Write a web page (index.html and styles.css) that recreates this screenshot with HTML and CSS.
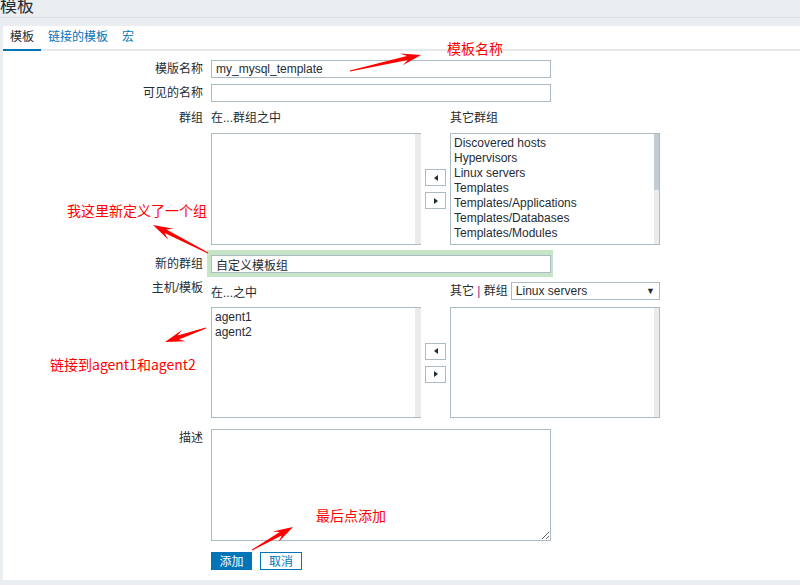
FILE: index.html
```html
<!DOCTYPE html>
<html lang="zh-CN">

<head>
  <meta charset="UTF-8">
  <title>模板</title>
  <link rel="stylesheet" href="styles.css">
</head>

<body>
  <div class="page-title">模板</div>

  <div class="panel">
    <ul class="tabs">
      <li class="active">模板</li>
      <li><a href="#">链接的模板</a></li>
      <li><a href="#">宏</a></li>
    </ul>

    <form class="form">
      <div class="row row-first">
        <label>模版名称</label>
        <div><input class="input" type="text" value="my_mysql_template"></div>
      </div>

      <div class="row row-visible">
        <label>可见的名称</label>
        <div><input class="input" type="text" value=""></div>
      </div>

      <div class="row row-groups">
        <label>群组</label>
        <div class="twin twin-groups">
          <div class="twin-head">在...群组之中</div>
          <div class="twin-head">其它群组</div>
          <div class="listbox listbox-left">
            <div class="items"></div>
            <div class="track"></div>
          </div>
          <div class="mover">
            <button type="button" class="move move-left"></button>
            <button type="button" class="move move-right"></button>
          </div>
          <div class="listbox listbox-right">
            <div class="items">
              <div>Discovered hosts</div>
              <div>Hypervisors</div>
              <div>Linux servers</div>
              <div>Templates</div>
              <div>Templates/Applications</div>
              <div>Templates/Databases</div>
              <div>Templates/Modules</div>
            </div>
            <div class="track"><div class="thumb"></div></div>
          </div>
        </div>
      </div>

      <div class="row row-newgroup">
        <label>新的群组</label>
        <div><span class="highlight"><input class="input" type="text" value="自定义模板组"></span></div>
      </div>

      <div class="row row-hosts">
        <label class="label-hosts">主机/模板</label>
        <div class="twin twin-hosts">
          <div class="twin-head head-low">在...之中</div>
          <div class="twin-head head-filter">
            <span>其它 <span class="sep">|</span> 群组</span>
            <div class="select"><span>Linux servers</span><span class="caret">▼</span></div>
          </div>
          <div class="listbox listbox-left">
            <div class="items">
              <div>agent1</div>
              <div>agent2</div>
            </div>
            <div class="track"></div>
          </div>
          <div class="mover">
            <button type="button" class="move move-left"></button>
            <button type="button" class="move move-right"></button>
          </div>
          <div class="listbox listbox-right">
            <div class="items"></div>
            <div class="track"></div>
          </div>
        </div>
      </div>

      <div class="row row-desc">
        <label>描述</label>
        <div><textarea class="textarea"></textarea></div>
      </div>

      <div class="row row-buttons">
        <span></span>
        <div class="buttons">
          <button type="button" class="btn btn-primary">添加</button>
          <button type="button" class="btn btn-alt">取消</button>
        </div>
      </div>
    </form>
  </div>

  <!-- annotations drawn on top of the screenshot -->
  <div class="note note-name">模板名称</div>
  <div class="note note-group">我这里新定义了一个组</div>
  <div class="note note-link">链接到agent1和agent2</div>
  <div class="note note-add">最后点添加</div>

  <svg class="arrows" width="800" height="585" viewBox="0 0 800 585">
    <polygon points="350.1,71.5 407.8,60.0 402.8,65.3 421,55 400.2,53.6 406.9,56.1 349.9,70.5" />
    <polygon points="208.2,252.6 166.4,229.6 173.5,228.7 153,225 168.1,239.4 164.6,233.1 207.8,253.5" />
    <polygon points="205.8,327.5 177.6,335.6 182.0,329.9 165,342 185.9,341.2 178.9,339.4 206.2,328.5" />
    <polygon points="252.2,550.4 281.8,535.6 278.5,542.0 293,527 272.6,531.6 279.8,532.1 251.8,549.6" />
  </svg>
</body>

</html>
```

FILE: styles.css
```css
body {
  margin: 0;
  background-color: #ebeef0;
  color: #1f2c33;
  font-family: "Liberation Sans", "Noto Sans CJK SC", sans-serif;
  font-size: 12px;
}

.page-title {
  height: 17px;
  border-bottom: 1px solid #dce1e5;
  font-family: "Noto Sans CJK SC", sans-serif;
  font-size: 17px;
  line-height: 10px;
  overflow: hidden;
  margin-bottom: 8px;
}

.panel {
  margin-left: 3px;
  background-color: #ffffff;
  padding-bottom: 10px;
}

/* tabs */
.tabs {
  display: flex;
  list-style: none;
  margin: 0;
  padding: 0;
  height: 23px;
  border-bottom: 2px solid #e6e9ec;
}

.tabs li {
  padding: 0 7px;
  line-height: 22px;
}

.tabs li.active {
  border-bottom: 2px solid #0275b8;
  margin-bottom: -2px;
}

.tabs a {
  color: #0275b8;
  text-decoration: none;
}

/* form rows */
.form {
  padding-top: 9px;
}

.row {
  display: grid;
  grid-template-columns: 200px 1fr;
  column-gap: 8px;
}

.row > label {
  text-align: right;
  line-height: 18px;
}

.row-visible { margin-top: 6px; }
.row-groups { margin-top: 7px; }
.row-newgroup { margin-top: 10px; }
.row-hosts { margin-top: 9px; }
.row-desc { margin-top: 11px; }
.row-buttons { margin-top: 11px; }

.label-hosts {
  line-height: 13px !important;
}

.input {
  box-sizing: border-box;
  width: 340px;
  height: 18px;
  margin: 0;
  padding: 0 4px;
  border: 1px solid #acbbc2;
  font-family: "Liberation Sans", "Noto Sans CJK SC", sans-serif;
  font-size: 12px;
  color: #1f2c33;
  display: block;
}

.highlight {
  display: inline-block;
  margin: -5px -2px -5px -4px;
  padding: 5px 2px 4px 4px;
  background-color: #c6e4c6;
}

/* twin listboxes */
.twin {
  display: grid;
  grid-template-columns: 210px 29px 210px;
}

.twin-groups {
  grid-template-rows: 18px 112px;
  row-gap: 6px;
}

.twin-hosts {
  grid-template-rows: 18px 111px;
  row-gap: 7px;
}

.twin-head {
  line-height: 18px;
  white-space: nowrap;
}

.twin-head:nth-child(2) {
  grid-column: 3;
}

.head-low {
  line-height: 22px;
}

.head-filter {
  display: flex;
  align-items: center;
  gap: 3px;
}

.sep {
  color: #7b2a86;
}

.select {
  box-sizing: border-box;
  width: 184px;
  height: 18px;
  border: 1px solid #acbbc2;
  display: flex;
  justify-content: space-between;
  align-items: center;
  padding: 0 4px;
}

.caret {
  font-size: 9px;
  color: #1f2c33;
}

.listbox {
  display: flex;
  border: 1px solid #acbbc2;
  border-right: none;
}

.items {
  flex: 1;
  padding: 2px 3px;
  line-height: 15px;
  white-space: nowrap;
  overflow: hidden;
}

.track {
  width: 6px;
  background-color: #ebebeb;
}

.listbox-right .track {
  border-right: 1px solid #acbbc2;
  width: 5px;
}

.thumb {
  height: 56px;
  background-color: #c3ccd3;
}

.mover {
  display: flex;
  flex-direction: column;
  justify-content: center;
  gap: 6px;
  padding-left: 4px;
}

.move {
  box-sizing: border-box;
  width: 21px;
  height: 17px;
  padding: 0;
  background-color: #ffffff;
  border: 1px solid #acbbc2;
  display: flex;
  align-items: center;
  justify-content: center;
}

.move::before {
  content: "";
  border-top: 3px solid transparent;
  border-bottom: 3px solid transparent;
}

.move-left::before {
  border-right: 4px solid #1f2c33;
}

.move-right::before {
  border-left: 4px solid #1f2c33;
}

.textarea {
  box-sizing: border-box;
  width: 340px;
  height: 112px;
  margin: 0;
  border: 1px solid #acbbc2;
  display: block;
}

/* buttons */
.buttons {
  display: flex;
  gap: 8px;
}

.btn {
  box-sizing: border-box;
  height: 18px;
  padding: 0;
  font-family: "Noto Sans CJK SC", sans-serif;
  font-size: 12px;
  line-height: 16px;
  border: 1px solid #0275b8;
}

.btn-primary {
  width: 41px;
  background-color: #0275b8;
  color: #ffffff;
}

.btn-alt {
  width: 42px;
  background-color: #ffffff;
  color: #0275b8;
}

/* red annotations */
.note {
  position: absolute;
  color: #ff0000;
  font-family: "Noto Sans CJK SC", sans-serif;
  font-size: 14px;
  line-height: 14px;
  white-space: nowrap;
}

.note-name { left: 447px; top: 41px; }
.note-group { left: 67px; top: 203px; }
.note-link { left: 50px; top: 357px; }
.note-add { left: 316px; top: 508px; }

.arrows {
  position: absolute;
  left: 0;
  top: 0;
  pointer-events: none;
}

.arrows polygon {
  fill: #ff0000;
}
```
